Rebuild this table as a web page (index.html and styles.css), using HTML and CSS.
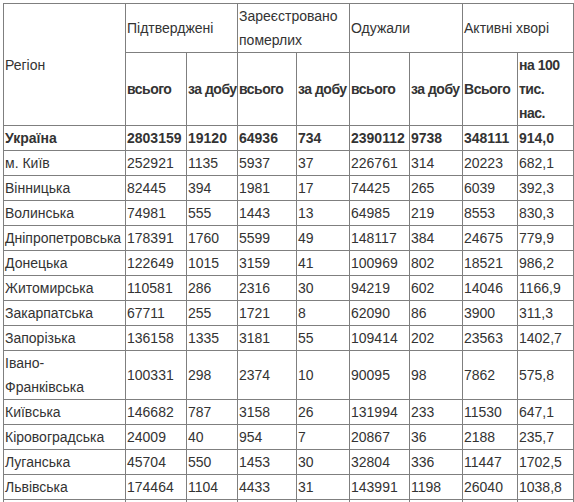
FILE: index.html
```html
<!DOCTYPE html>
<html lang="uk">
<head>
<meta charset="utf-8">
<link rel="stylesheet" href="styles.css">
</head>
<body>
<table class="covid">
<colgroup>
<col class="c-region"><col class="c-a"><col class="c-b"><col class="c-c"><col class="c-d"><col class="c-e"><col class="c-f"><col class="c-g"><col class="c-h">
</colgroup>
<thead>
<tr><td rowspan="2">Регіон</td><td colspan="2">Підтверджені</td><td colspan="2">Зареєстровано померлих</td><td colspan="2">Одужали</td><td colspan="2">Активні хворі</td></tr>
<tr class="sub"><td>всього</td><td class="nowrap">за добу</td><td>всього</td><td class="nowrap">за добу</td><td>всього</td><td class="nowrap">за добу</td><td>Всього</td><td>на 100 тис. нас.</td></tr>
</thead>
<tbody>
<tr class="total"><td>Україна</td><td>2803159</td><td>19120</td><td>64936</td><td>734</td><td>2390112</td><td>9738</td><td>348111</td><td>914,0</td></tr>
<tr><td>м. Київ</td><td>252921</td><td>1135</td><td>5937</td><td>37</td><td>226761</td><td>314</td><td>20223</td><td>682,1</td></tr>
<tr><td>Вінницька</td><td>82445</td><td>394</td><td>1981</td><td>17</td><td>74425</td><td>265</td><td>6039</td><td>392,3</td></tr>
<tr><td>Волинська</td><td>74981</td><td>555</td><td>1443</td><td>13</td><td>64985</td><td>219</td><td>8553</td><td>830,3</td></tr>
<tr><td>Дніпропетровська</td><td>178391</td><td>1760</td><td>5599</td><td>49</td><td>148117</td><td>384</td><td>24675</td><td>779,9</td></tr>
<tr><td>Донецька</td><td>122649</td><td>1015</td><td>3159</td><td>41</td><td>100969</td><td>802</td><td>18521</td><td>986,2</td></tr>
<tr><td>Житомирська</td><td>110581</td><td>286</td><td>2316</td><td>30</td><td>94219</td><td>602</td><td>14046</td><td>1166,9</td></tr>
<tr><td>Закарпатська</td><td>67711</td><td>255</td><td>1721</td><td>8</td><td>62090</td><td>86</td><td>3900</td><td>311,3</td></tr>
<tr><td>Запорізька</td><td>136158</td><td>1335</td><td>3181</td><td>55</td><td>109414</td><td>202</td><td>23563</td><td>1402,7</td></tr>
<tr><td>Івано-<br>Франківська</td><td>100331</td><td>298</td><td>2374</td><td>10</td><td>90095</td><td>98</td><td>7862</td><td>575,8</td></tr>
<tr><td>Київська</td><td>146682</td><td>787</td><td>3158</td><td>26</td><td>131994</td><td>233</td><td>11530</td><td>647,1</td></tr>
<tr><td>Кіровоградська</td><td>24009</td><td>40</td><td>954</td><td>7</td><td>20867</td><td>36</td><td>2188</td><td>235,7</td></tr>
<tr><td>Луганська</td><td>45704</td><td>550</td><td>1453</td><td>30</td><td>32804</td><td>336</td><td>11447</td><td>1702,5</td></tr>
<tr><td>Львівська</td><td>174464</td><td>1104</td><td>4433</td><td>31</td><td>143991</td><td>1198</td><td>26040</td><td>1038,8</td></tr>
<tr class="empty"><td></td><td></td><td></td><td></td><td></td><td></td><td></td><td></td><td></td></tr>
</tbody>
</table>
</body>
</html>
```
FILE: styles.css
```css
html, body {
  margin: 0;
  padding: 0;
  background: #fff;
}
body {
  padding: 3px 0 0 3px;
  font-family: "Liberation Sans", Arial, sans-serif;
  font-size: 14px;
  color: #333;
}
.covid {
  border-collapse: collapse;
  table-layout: fixed;
  width: 571px;
}
.covid td {
  border: 1px solid #7f7f7f;
  padding: 0 1px;
  line-height: 24px;
  vertical-align: middle;
  text-align: left;
}
.covid .empty td {
  height: 24px;
}
.c-region { width: 122px; }
.c-a { width: 61px; }
.c-b { width: 51px; }
.c-c { width: 59px; }
.c-d { width: 53px; }
.c-e { width: 60px; }
.c-f { width: 53px; }
.c-g { width: 55px; }
.c-h { width: 56px; }
.sub td, .total td {
  font-weight: bold;
}
.sub td {
  letter-spacing: -0.5px;
}
.sub .nowrap {
  white-space: nowrap;
}
```
